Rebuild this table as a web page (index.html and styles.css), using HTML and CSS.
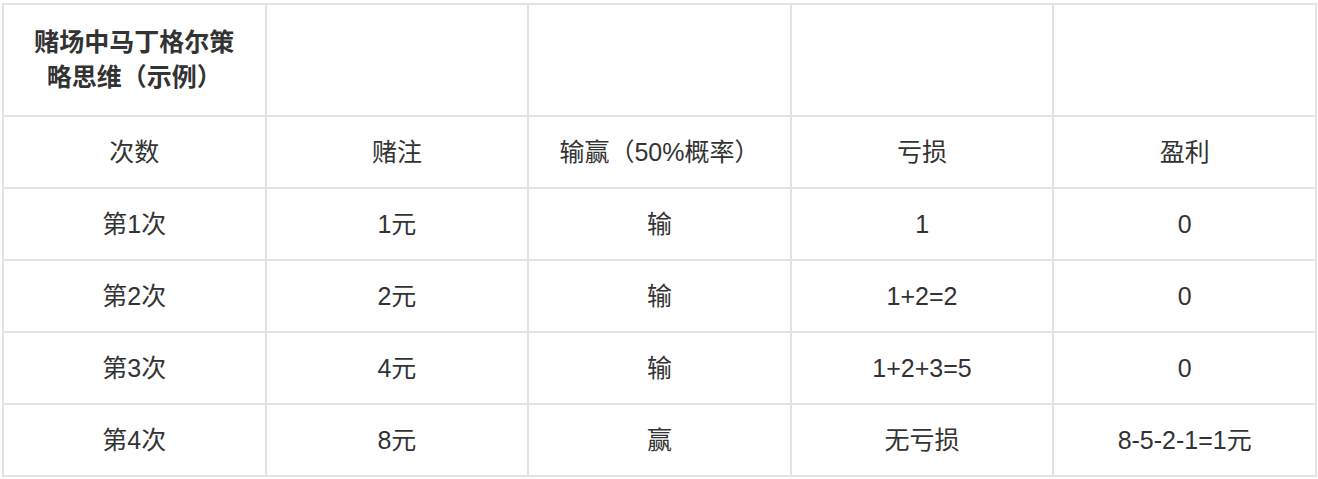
FILE: index.html
```html
<!DOCTYPE html>
<html lang="zh-CN">
<head>
<meta charset="utf-8">
<link rel="stylesheet" href="styles.css">
</head>
<body>
<table class="tbl">
  <colgroup><col><col><col><col><col></colgroup>
  <tr class="head">
    <th>赌场中马丁格尔策略思维（示例）</th><th></th><th></th><th></th><th></th>
  </tr>
  <tr><td>次数</td><td>赌注</td><td>输赢（50%概率）</td><td>亏损</td><td>盈利</td></tr>
  <tr><td>第1次</td><td>1元</td><td>输</td><td>1</td><td>0</td></tr>
  <tr><td>第2次</td><td>2元</td><td>输</td><td>1+2=2</td><td>0</td></tr>
  <tr><td>第3次</td><td>4元</td><td>输</td><td>1+2+3=5</td><td>0</td></tr>
  <tr><td>第4次</td><td>8元</td><td>赢</td><td>无亏损</td><td>8-5-2-1=1元</td></tr>
</table>
</body>
</html>
```

FILE: styles.css
```css
html, body {
  margin: 0;
  padding: 0;
  background: #ffffff;
}
body {
  padding: 3px 0 0 2px;
  font-family: "Liberation Sans", "Noto Sans CJK SC", sans-serif;
  color: #333333;
}
.tbl {
  border-collapse: collapse;
  width: 1315px;
  table-layout: fixed;
}
.tbl th,
.tbl td {
  border: 2px solid #e3e3e7;
  text-align: center;
  font-size: 25px;
  padding: 0 22px;
}
.tbl th {
  font-weight: 700;
  height: 110px;
  line-height: 35px;
}
.tbl td {
  height: 70px;
  line-height: 30px;
}
```
